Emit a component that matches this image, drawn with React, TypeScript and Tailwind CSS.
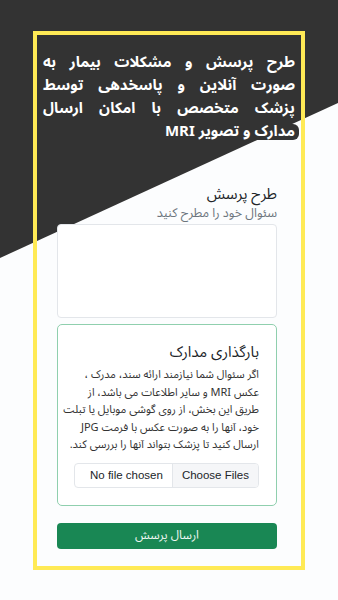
const lines = [
  "اگر سئوال شما نیازمند ارائه سند، مدرک ،",
  "عکس MRI و سایر اطلاعات می باشد، از",
  "طریق این بخش، از روی گوشی موبایل یا تبلت",
  "خود، آنها را به صورت عکس با فرمت JPG",
  "ارسال کنید تا پزشک بتواند آنها را بررسی کند.",
];

const titleLines = [
  "طرح پرسش و مشکلات بیمار به",
  "صورت آنلاین و پاسخدهی توسط",
  "پزشک متخصص با امکان ارسال",
];

const App = () => {
  return (
    <div
      dir="rtl"
      className="relative min-h-[600px] w-full overflow-hidden bg-[#fcfdfe] pt-[31px] pb-[31px] font-['Noto_Sans_Arabic','DejaVu_Sans',sans-serif]"
    >
      {/* dark diagonal backdrop */}
      <div className="absolute inset-0 bg-[#333333] [clip-path:polygon(0_0,100%_0,100%_103px,0_258px)]" />

      <div className="relative mx-auto w-[272px] border-4 border-[#ffea55] pt-[16px] pb-[17px]">
        <h1 className="px-[6px] text-[15px] leading-[23px] font-bold text-white">
          {titleLines.map((l) => (
            <span key={l} className="block text-justify [text-align-last:justify]">
              {l}
            </span>
          ))}
          <span className="block h-[23px] pt-[4px]">
            <span className="-mr-[4px] inline-block h-[16px] rounded-md bg-[#333333] pr-[4px] pl-[3px] align-top leading-[15px]">
              مدارک و تصویر MRI
            </span>
          </span>
        </h1>

        <form className="mt-[41px] pr-[24px] pl-[20px]">
          <label className="block text-[15px] leading-[20px] text-[#212529]">طرح پرسش</label>
          <p className="text-[12.5px] leading-[18px] text-[#6c757d]">سئوال خود را مطرح کنید</p>
          <textarea className="mt-[2px] block h-[94px] w-full resize-none rounded-[4px] border border-[#e3e6ea] bg-white" />

          <div className="mt-[6px] rounded-[5px] border border-[#8fcfae] bg-white pt-[16px] pr-[17px] pb-[17px] pl-[16px]">
            <h2 className="text-[15px] leading-[22px] text-[#212529]">بارگذاری مدارک</h2>
            <p className="mt-[3px] text-[11px] leading-[17.5px] text-[#333]">
              {lines.map((l) => (
                <span key={l} className="block whitespace-nowrap">
                  {l}
                </span>
              ))}
            </p>
            <input
              type="file"
              multiple
              className="mt-[9px] block h-[25px] w-full overflow-hidden rounded-[4px] border border-[#e3e6ea] bg-white text-[11.5px] leading-[23px] text-[#212529] font-['Liberation_Sans',sans-serif] file:mr-0 file:ml-[9px] file:h-full file:border-0 file:border-l file:border-[#e3e6ea] file:bg-[#f5f6f8] file:px-[9px] file:text-[11.5px] file:text-[#212529]"
            />
          </div>

          <button
            type="button"
            className="mt-[17px] block h-[26px] w-full rounded-[4px] bg-[#198754] text-[12px] text-[#eef7f2]"
          >
            ارسال پرسش
          </button>
        </form>
      </div>
    </div>
  );
};

export default App;
